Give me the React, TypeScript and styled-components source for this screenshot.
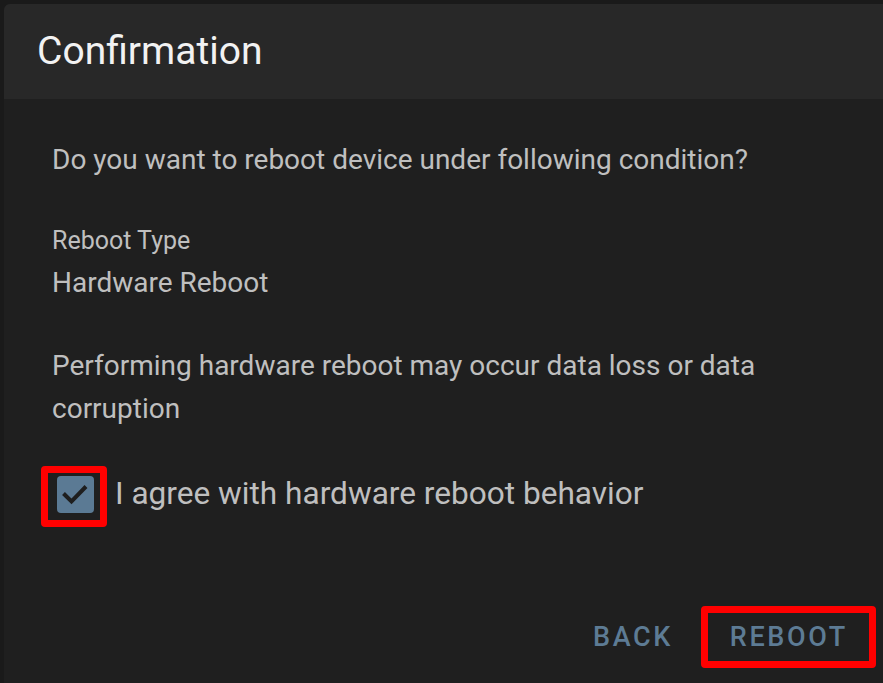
import React from "react";
import styled, { createGlobalStyle } from "styled-components";

const Global = createGlobalStyle`
  html, body { margin: 0; padding: 0; background: #1a1a1a; }
  body { font-family: Roboto, "Noto Sans", "Liberation Sans", sans-serif; }
  #root { width: 883px; height: 683px; overflow: hidden; }
`;

const Backdrop = styled.div`
  width: 883px;
  height: 683px;
  padding: 4px 0 0 4px;
  box-sizing: border-box;
  background: #1a1a1a;
  overflow: hidden;
`;

const Dialog = styled.div`
  width: 900px;
  height: 720px;
  background: #1f1f1f;
  border-radius: 6px 0 0 0;
  display: flex;
  flex-direction: column;
  overflow: hidden;
`;

const Header = styled.div`
  height: 95px;
  background: #282828;
  display: flex;
  align-items: center;
  padding-left: 33px;
  flex-shrink: 0;
`;

const Title = styled.h2`
  margin: 0;
  font-size: 39px;
  font-weight: 400;
  color: #f2f2f2;
  line-height: 1;
`;

const Body = styled.div`
  padding: 39px 48px 0 48px;
  display: flex;
  flex-direction: column;
  color: #bfbfbf;
`;

const Text = styled.p<{ $mt?: number }>`
  margin: ${(p) => p.$mt ?? 0}px 0 0 0;
  font-size: 28px;
  line-height: 43px;
  width: 760px;
`;

const Caption = styled.div<{ $mt?: number }>`
  margin-top: ${(p) => p.$mt ?? 0}px;
  font-size: 25px;
  line-height: 37px;
  margin-bottom: 2px;
`;

const CheckRow = styled.label`
  margin-top: 44px;
  display: flex;
  align-items: center;
  gap: 21px;
  font-size: 31.6px;
  line-height: 40px;
  color: #bfbfbf;
  position: relative;
  margin-left: 5px;
`;

const Box = styled.span`
  width: 37px;
  height: 37px;
  border-radius: 4px;
  background: #5b7a94;
  display: flex;
  flex-shrink: 0;
`;

const Highlight = styled.span<{ $l: number; $t: number; $w: number; $h: number }>`
  position: absolute;
  left: ${(p) => p.$l}px;
  top: ${(p) => p.$t}px;
  width: ${(p) => p.$w}px;
  height: ${(p) => p.$h}px;
  border: 7px solid #ff0000;
  border-radius: 4px;
  box-sizing: border-box;
  pointer-events: none;
`;

const Actions = styled.div`
  margin-top: 95px;
  display: flex;
  justify-content: flex-start;
  padding-left: 517px;
  gap: 9px;
`;

const Button = styled.button`
  position: relative;
  background: transparent;
  border: none;
  padding: 8px 24px 8px 24px;
  font-family: Roboto, "Noto Sans", sans-serif;
  font-weight: 500;
  font-size: 27px;
  letter-spacing: 2.6px;
  line-height: 40px;
  color: #5d7b94;
  text-transform: uppercase;
  cursor: pointer;
`;

export default function App() {
  return (
    <>
      <Global />
      <Backdrop>
        <Dialog>
          <Header>
            <Title>Confirmation</Title>
          </Header>
          <Body>
            <Text>Do you want to reboot device under following condition?</Text>
            <Caption $mt={41}>Reboot Type</Caption>
            <Text $mt={0}>Hardware Reboot</Text>
            <Text $mt={40}>
              Performing hardware reboot may occur data loss or data corruption
            </Text>
            <CheckRow>
              <Box>
                <svg width="37" height="37" viewBox="0 0 37 37">
                  <path
                    d="M6.5 17.5 L14.5 25.5 L29 10.5"
                    fill="none"
                    stroke="#1e1e1e"
                    strokeWidth="4"
                    strokeLinecap="butt"
                    strokeLinejoin="miter"
                  />
                </svg>
              </Box>
              <span>I agree with hardware reboot behavior</span>
              <Highlight $l={-16} $t={-8} $w={66} $h={61} />
            </CheckRow>
            <Actions>
              <Button>Back</Button>
              <Button>
                Reboot
                <Highlight $l={-5} $t={-3} $w={175} $h={62} />
              </Button>
            </Actions>
          </Body>
        </Dialog>
      </Backdrop>
    </>
  );
}
